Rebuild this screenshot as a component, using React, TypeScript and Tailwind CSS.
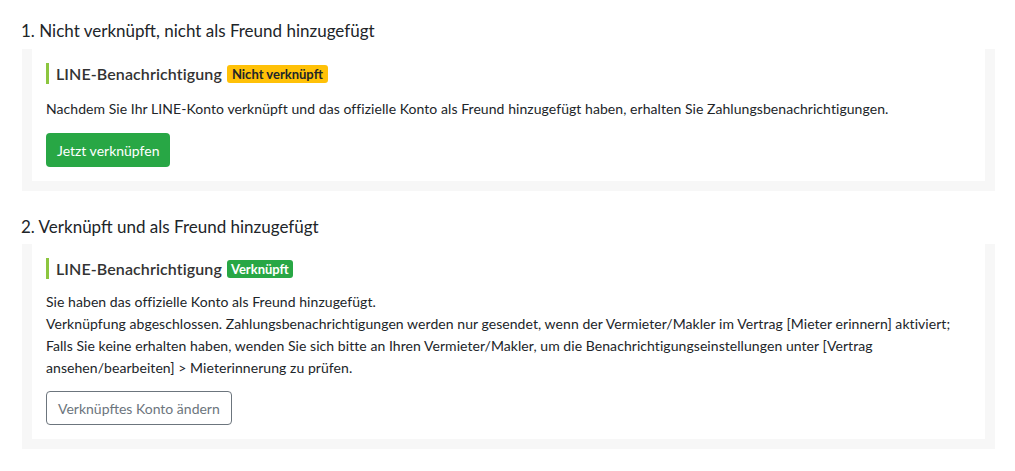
export default function App() {
  return (
    <div className="min-h-[471px] bg-white pl-[21px] pr-[20px] pt-[19px] text-[#212529] font-['Lato',sans-serif]">
      <h3 className="text-[17px] leading-[24px] font-normal">1. Nicht verknüpft, nicht als Freund hinzugefügt</h3>
      <div className="mt-[6px] ml-[1px] bg-[#f7f7f7] px-[10px] pb-[10px]">
        <div className="bg-white px-[14px] pt-[14px] pb-[14px]">
          <div className="flex h-[21px] items-center border-l-[3px] border-[#8cc63f] pl-[7px]">
            <span className="text-[16px] font-semibold tracking-[0.1px] text-[#333]">LINE-Benachrichtigung</span>
            <span className="ml-[5px] rounded-[3px] bg-[#ffc107] px-[5px] text-[13px] font-bold leading-[18px] text-[#212529]">Nicht verknüpft</span>
          </div>
          <p className="mt-[14px] text-[14px] leading-[22px] tracking-[0.06px]">
            Nachdem Sie Ihr LINE-Konto verknüpft und das offizielle Konto als Freund hinzugefügt haben, erhalten Sie Zahlungsbenachrichtigungen.
          </p>
          <button className="mt-[13px] h-[34px] rounded-[4px] bg-[#28a745] px-[11px] text-[14px] text-white">Jetzt verknüpfen</button>
        </div>
      </div>

      <h3 className="mt-[24px] text-[17px] leading-[24px] font-normal">2. Verknüpft und als Freund hinzugefügt</h3>
      <div className="mt-[5px] ml-[1px] bg-[#f7f7f7] px-[10px] pb-[10px]">
        <div className="bg-white px-[14px] pt-[14px] pb-[14px]">
          <div className="flex h-[21px] items-center border-l-[3px] border-[#8cc63f] pl-[7px]">
            <span className="text-[16px] font-semibold tracking-[0.1px] text-[#333]">LINE-Benachrichtigung</span>
            <span className="ml-[5px] rounded-[3px] bg-[#28a745] px-[4px] text-[13px] font-bold leading-[18px] text-white">Verknüpft</span>
          </div>
          <p className="mt-[12px] text-[14px] leading-[22px] tracking-[0.06px]">
            Sie haben das offizielle Konto als Freund hinzugefügt.
            <br />
            Verknüpfung abgeschlossen. Zahlungsbenachrichtigungen werden nur gesendet, wenn der Vermieter/Makler im Vertrag [Mieter erinnern] aktiviert;
            <br />
            Falls Sie keine erhalten haben, wenden Sie sich bitte an Ihren Vermieter/Makler, um die Benachrichtigungseinstellungen unter [Vertrag ansehen/bearbeiten] &gt; Mieterinnerung zu prüfen.
          </p>
          <button className="mt-[12px] h-[34px] rounded-[4px] border border-[#6c757d] bg-white px-[11px] text-[14px] text-[#6c757d]">Verknüpftes Konto ändern</button>
        </div>
      </div>
    </div>
  );
}
